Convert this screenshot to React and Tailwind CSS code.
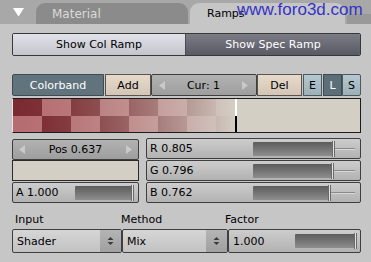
import React from 'react';

const DARK0 = [122, 42, 48];
const LIGHT0 = [182, 108, 112];
const END = [211, 206, 197];
const CELLS = [29, 29, 29, 29, 29, 29, 29, 19];
const BAND_W = 222;

// colour of the band at x (0..BAND_W) for a dark or light checker square
const bandColor = (x, dark) => {
    const t = Math.pow(Math.min(x / BAND_W, 1), 1.6);
    const a = dark ? DARK0 : LIGHT0;
    const c = a.map((v, i) => Math.round(v + (END[i] - v) * t));
    return `rgb(${c[0]},${c[1]},${c[2]})`;
};

const Checker = () => {
    let x = 0;
    return (
        <div className="flex w-[222px]">
            {CELLS.map((w, i) => {
                const x0 = x;
                x += w;
                const topDark = i % 2 === 0;
                return (
                    <div key={i} className="flex flex-col" style={{ width: w }}>
                        <div
                            className="h-[17px]"
                            style={{ background: `linear-gradient(to right, ${bandColor(x0, topDark)}, ${bandColor(x, topDark)})` }}
                        />
                        <div
                            className="flex-1"
                            style={{ background: `linear-gradient(to right, ${bandColor(x0, !topDark)}, ${bandColor(x, !topDark)})` }}
                        />
                    </div>
                );
            })}
        </div>
    );
};

const Arrow = ({ dir }) => (
    <svg width="6" height="9" viewBox="0 0 6 9">
        {dir === 'left'
            ? <path d="M6 0 L0 4.5 L6 9 Z" fill="#c9c9c9" />
            : <path d="M0 0 L6 4.5 L0 9 Z" fill="#c9c9c9" />}
    </svg>
);

const NumField = ({ text, className }) => (
    <div className={`flex items-center justify-between px-[6px] border border-[#3e3e3e] rounded-[2px] bg-gradient-to-b from-[#b2b2b2] to-[#9e9e9e] ${className}`}>
        <Arrow dir="left" />
        <span>{text}</span>
        <Arrow dir="right" />
    </div>
);

const Slider = ({ label, value, textW, trackW, className }) => (
    <div className={`flex items-center border border-[#3e3e3e] rounded-[2px] bg-gradient-to-b from-[#cdcdcd] to-[#b2b2b2] ${className}`}>
        <span className="pl-[3px]" style={{ width: textW }}>{label}</span>
        <div className="flex items-center h-[14px]" style={{ width: trackW }}>
            <div
                className="h-full bg-gradient-to-b from-[#5c5c5c] to-[#8e8e8e] rounded-l-[1px]"
                style={{ width: Math.round(value * trackW) - 3 }}
            />
            <div className="w-[3px] h-[16px] bg-[#e2e2e2] border-x border-[#6a6a6a]" />
            <div className="flex-1 h-[2px] bg-[#8a8a8a] border-b border-[#d8d8d8]" />
        </div>
    </div>
);

const UpDown = () => (
    <svg width="7" height="10" viewBox="0 0 7 10">
        <path d="M0.5 4 L3.5 1 L6.5 4 Z" fill="#3a3a3a" />
        <path d="M0.5 6 L3.5 9 L6.5 6 Z" fill="#3a3a3a" />
    </svg>
);

const Menu = ({ text, className }) => (
    <div className={`flex border border-[#3e3e3e] rounded-[2px] bg-gradient-to-b from-[#d6d6d6] to-[#c2c2c2] ${className}`}>
        <span className="flex-1 flex items-center pl-[4px]">{text}</span>
        <div className="w-[21px] flex items-center justify-center bg-gradient-to-b from-[#b4b4b4] to-[#a0a0a0]">
            <UpDown />
        </div>
    </div>
);

export default function App() {
    return (
        <div className="relative w-[371px] h-[262px] overflow-hidden bg-[#c6c6c6] text-black text-[11px] leading-none font-['DejaVu_Sans',sans-serif]">
            {/* Tabs */}
            <div className="flex items-end h-[24px] bg-[#a8a8a8]">
                <div className="w-[36px] h-full flex items-center pl-[13px]">
                    <svg width="11" height="9" viewBox="0 0 11 9">
                        <path d="M0 0 L11 0 L5.5 8.5 Z" fill="#ffffff" />
                    </svg>
                </div>
                <div className="w-[152px] h-[21px] rounded-t-[9px] bg-[#8b8b8b] text-[#dadada] text-[12px] flex items-center pl-[16px]">
                    Material
                </div>
                <div className="ml-[2px] w-[155px] h-[21px] rounded-t-[9px] bg-[#c6c6c6] flex items-center pl-[17px]">
                    Ramps
                </div>
                <div className="ml-[2px] flex-1 h-[10px] rounded-tl-[4px] bg-[#999999]" />
            </div>
            <div className="absolute left-[237px] top-[0px] text-[17px] leading-[20px] text-[#3434c6] font-['Liberation_Sans',Arial,sans-serif]">
                www.foro3d.com
            </div>

            <div className="pl-[12px] pr-[10px]">
                {/* Col / Spec ramp toggles */}
                <div className="mt-[9px] flex h-[23px] border border-[#383838] rounded-[2px] overflow-hidden">
                    <div className="w-[173px] flex items-center justify-center bg-gradient-to-b from-[#e2e2ea] to-[#c4c4cc] border-r border-[#4a4a52]">
                        Show Col Ramp
                    </div>
                    <div className="flex-1 flex items-center justify-center text-white bg-gradient-to-b from-[#7c7c86] to-[#5a5a64]">
                        Show Spec Ramp
                    </div>
                </div>

                {/* Colorband row */}
                <div className="mt-[18px] flex h-[22px]">
                    <div className="w-[92px] flex items-center justify-center text-white bg-[#61747e] border border-[#3e4c52] rounded-l-[2px]">
                        Colorband
                    </div>
                    <div className="ml-[1px] w-[46px] flex items-center justify-center bg-gradient-to-b from-[#e6dacb] to-[#d4c6b6] border border-[#5a544c]">
                        Add
                    </div>
                    <NumField text="Cur: 1" className="w-[106px] pl-[7px] pr-[8px]" />
                    <div className="w-[45px] flex items-center justify-center bg-gradient-to-b from-[#e6dacb] to-[#d4c6b6] border border-[#5a544c]">
                        Del
                    </div>
                    <div className="ml-[1px] w-[19px] flex items-center justify-center bg-gradient-to-b from-[#b6c8d0] to-[#9cb0b8] border border-[#4a5a60]">
                        E
                    </div>
                    <div className="ml-[1px] w-[19px] flex items-center justify-center text-white bg-[#5c6e77] border border-[#3e4c52]">
                        L
                    </div>
                    <div className="w-[19px] flex items-center justify-center bg-gradient-to-b from-[#b6c8d0] to-[#9cb0b8] border border-[#4a5a60] rounded-r-[2px]">
                        S
                    </div>
                </div>

                {/* Colorband */}
                <div className="mt-[2px] h-[35px] flex border border-[#1c1c1c] border-l-[#e6e6e6] bg-[#d3cfc5]">
                    <Checker />
                    <div className="w-[2px] flex flex-col">
                        <div className="flex-1 bg-white" />
                        <div className="flex-1 bg-black" />
                    </div>
                    <div className="flex-1" />
                </div>

                {/* Pos / colour / alpha and RGB */}
                <div className="mt-[5px] flex gap-[7px]">
                    <div className="w-[127px] flex flex-col">
                        <NumField text="Pos 0.637" className="h-[21px] mt-[1px]" />
                        <div className="h-[21px] bg-[#d3cfc5] border border-[#2a2a2a]" />
                        <Slider label="A 1.000" value={1} textW={62} trackW={59} className="h-[21px] mt-[1px]" />
                    </div>
                    <div className="flex-1 flex flex-col gap-[1px]">
                        <Slider label="R 0.805" value={0.805} textW={106} trackW={102} className="h-[21px]" />
                        <Slider label="G 0.796" value={0.796} textW={106} trackW={102} className="h-[21px]" />
                        <Slider label="B 0.762" value={0.762} textW={106} trackW={102} className="h-[21px]" />
                    </div>
                </div>

                {/* Input / Method / Factor */}
                <div className="mt-[10px] flex h-[13px] items-center">
                    <span className="w-[109px] pl-[3px]">Input</span>
                    <span className="w-[104px]">Method</span>
                    <span>Factor</span>
                </div>
                <div className="mt-[3px] flex h-[24px]">
                    <Menu text="Shader" className="w-[110px]" />
                    <Menu text="Mix" className="w-[106px]" />
                    <Slider label="1.000" value={1} textW={65} trackW={62} className="flex-1 pl-[1px]" />
                </div>
            </div>
        </div>
    );
}
